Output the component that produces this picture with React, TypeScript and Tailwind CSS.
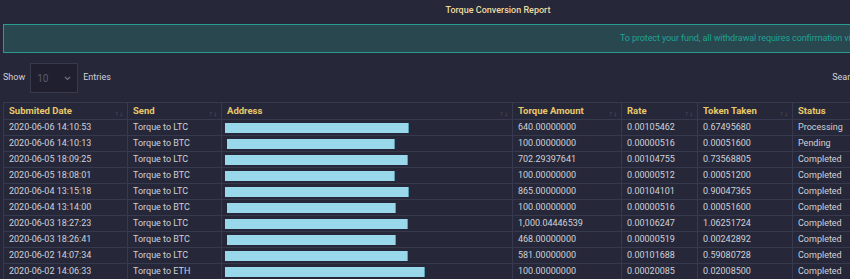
const rows = [
  { date: '2020-06-06 14:10:53', send: 'Torque to LTC', bar: [1, 184], amount: '640.00000000', rate: '0.00105462', token: '0.67495680', status: 'Processing' },
  { date: '2020-06-06 14:10:13', send: 'Torque to BTC', bar: [3, 168], amount: '100.00000000', rate: '0.00000516', token: '0.00051600', status: 'Pending' },
  { date: '2020-06-05 18:09:25', send: 'Torque to LTC', bar: [1, 183], amount: '702.29397641', rate: '0.00104755', token: '0.73568805', status: 'Completed' },
  { date: '2020-06-05 18:08:01', send: 'Torque to BTC', bar: [1, 170], amount: '100.00000000', rate: '0.00000512', token: '0.00051200', status: 'Completed' },
  { date: '2020-06-04 13:15:18', send: 'Torque to LTC', bar: [1, 184], amount: '865.00000000', rate: '0.00104101', token: '0.90047365', status: 'Completed' },
  { date: '2020-06-04 13:14:00', send: 'Torque to BTC', bar: [3, 169], amount: '100.00000000', rate: '0.00000516', token: '0.00051600', status: 'Completed' },
  { date: '2020-06-03 18:27:23', send: 'Torque to LTC', bar: [1, 183], amount: '1,000.04446539', rate: '0.00106247', token: '1.06251724', status: 'Completed' },
  { date: '2020-06-03 18:26:41', send: 'Torque to BTC', bar: [3, 169], amount: '468.00000000', rate: '0.00000519', token: '0.00242892', status: 'Completed' },
  { date: '2020-06-02 14:07:34', send: 'Torque to LTC', bar: [1, 183], amount: '581.00000000', rate: '0.00101688', token: '0.59080728', status: 'Completed' },
  { date: '2020-06-02 14:06:33', send: 'Torque to ETH', bar: [1, 200], amount: '100.00000000', rate: '0.00020085', token: '0.02008500', status: 'Completed' },
];

const columns = [
  { label: 'Submited Date', width: 'w-[124px]' },
  { label: 'Send', width: 'w-[94px]' },
  { label: 'Address', width: 'w-[291px]' },
  { label: 'Torque Amount', width: 'w-[109px]' },
  { label: 'Rate', width: 'w-[76px]' },
  { label: 'Token Taken', width: 'w-[95px]' },
  { label: 'Status', width: 'w-[90px]' },
];

function SortArrows() {
  return (
    <span className="absolute right-[4px] bottom-[1px] flex gap-[1px] text-[7px] leading-none text-[#5d5f73]">
      <span>↑</span>
      <span>↓</span>
    </span>
  );
}

export default function App() {
  return (
    <div className="w-[850px] h-[279px] overflow-hidden bg-[#262839] font-['Roboto',sans-serif] text-[#d0d1da]">
      <div className="w-[996px]">
        <div className="h-[22px] flex items-center justify-center text-[9px] font-medium text-[#efdb9f]">
          Torque Conversion Report
        </div>

        <div className="ml-[3px] mt-[2px] h-[29px] border border-[#2a9b8f] bg-[#28474f] flex items-center pl-[616px] whitespace-nowrap text-[9px] tracking-[-0.1px] text-[#1fa394]">
          To protect your fund, all withdrawal requires confirmation via email.
        </div>

        <div className="mt-[10px] h-[30px] flex items-center justify-between pl-[3px] pr-[3px] text-[9px]">
          <div className="flex items-center gap-[5px]">
            <span>Show</span>
            <div className="w-[48px] h-[30px] bg-[#1f1f2f] border border-[#383a4c] flex items-center justify-between px-[6px] text-[10px] text-[#5b5c6c]">
              <span>10</span>
              <svg width="7" height="5" viewBox="0 0 7 5" fill="none" stroke="#6e6f80" strokeWidth="1.2">
                <path d="M1 1l2.5 2.5L6 1" />
              </svg>
            </div>
            <span>Entries</span>
          </div>
          <div className="flex items-center gap-[5px]">
            <span>Search:</span>
            <div className="w-[126px] h-[24px] bg-[#1f1f2f] border border-[#383a4c]" />
          </div>
        </div>

        <table className="ml-[3px] mt-[9px] border-collapse text-[9px] leading-none">
          <thead>
            <tr className="h-[17px]">
              {columns.map((col) => (
                <th
                  key={col.label}
                  className={`${col.width} relative border border-[#373a4e] px-[5px] text-left align-middle font-bold text-[9.5px] text-[#e8c86a]`}
                >
                  {col.label}
                  <SortArrows />
                </th>
              ))}
            </tr>
          </thead>
          <tbody>
            {rows.map((row) => (
              <tr key={row.date} className="h-[16px]">
                <td className="border border-[#373a4e] px-[5px]">{row.date}</td>
                <td className="border border-[#373a4e] px-[5px]">{row.send}</td>
                <td className="border border-[#373a4e] px-[2px]">
                  <div
                    className="h-[10px] bg-[#99d8ea] border-r border-[#5d9db3]"
                    style={{ marginLeft: row.bar[0], width: row.bar[1] }}
                  />
                </td>
                <td className="border border-[#373a4e] px-[5px]">{row.amount}</td>
                <td className="border border-[#373a4e] px-[5px]">{row.rate}</td>
                <td className="border border-[#373a4e] px-[5px]">{row.token}</td>
                <td className="border border-[#373a4e] px-[5px]">{row.status}</td>
              </tr>
            ))}
          </tbody>
        </table>
      </div>
    </div>
  );
}
